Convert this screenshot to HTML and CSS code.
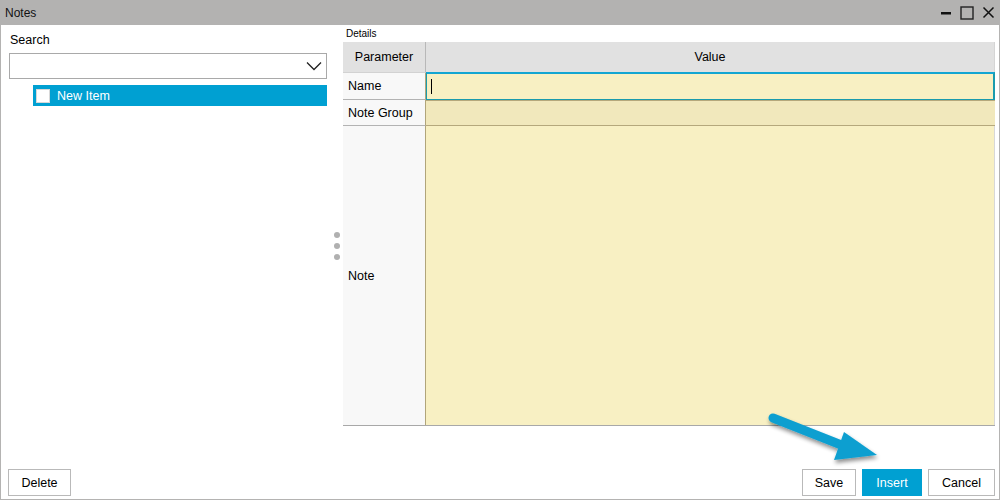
FILE: index.html
```html
<!DOCTYPE html>
<html>
<head>
<meta charset="utf-8">
<link rel="stylesheet" href="styles.css">
</head>
<body>
<div class="window">
  <div class="titlebar">
    <span class="title">Notes</span>
    <div class="controls">
      <svg width="12" height="12" viewBox="0 0 12 12"><rect x="1" y="5" width="10" height="2.5" fill="#111"/></svg>
      <svg width="14" height="14" viewBox="0 0 14 14"><rect x="1" y="1" width="12" height="12" fill="none" stroke="#222" stroke-width="1.4"/></svg>
      <svg width="13" height="13" viewBox="0 0 13 13"><path d="M1.5 1.5 L11.5 11.5 M11.5 1.5 L1.5 11.5" stroke="#111" stroke-width="1.5"/></svg>
    </div>
  </div>
  <div class="main">
    <div class="left">
      <div class="label">Search</div>
      <div class="combo">
        <svg class="chev" width="16" height="10" viewBox="0 0 16 10"><path d="M1 1.5 L8 8.5 L15 1.5" fill="none" stroke="#222" stroke-width="1.3"/></svg>
      </div>
      <div class="tree-item">
        <span class="check"></span>
        <span class="item-text">New Item</span>
      </div>
    </div>
    <div class="splitter">
      <span class="dot"></span><span class="dot"></span><span class="dot"></span>
    </div>
    <div class="right">
      <div class="details-label">Details</div>
      <div class="grid">
        <div class="hcell hparam">Parameter</div>
        <div class="hcell hvalue">Value</div>
        <div class="pcell r-name">Name</div>
        <div class="vcell focus"><span class="caret"></span></div>
        <div class="pcell r-group">Note Group</div>
        <div class="vcell group"></div>
        <div class="pcell r-note">Note</div>
        <div class="vcell note"></div>
      </div>
    </div>
  </div>
  <div class="footer">
    <button class="btn b-delete">Delete</button>
    <div class="spacer"></div>
    <button class="btn b-save">Save</button>
    <button class="btn primary b-insert">Insert</button>
    <button class="btn b-cancel">Cancel</button>
  </div>
  <svg class="arrow" width="140" height="70" viewBox="0 0 140 70">
    <defs>
      <filter id="sh" x="-20%" y="-20%" width="140%" height="160%">
        <feGaussianBlur in="SourceAlpha" stdDeviation="2"/>
        <feOffset dx="1" dy="3"/>
        <feComponentTransfer><feFuncA type="linear" slope="0.45"/></feComponentTransfer>
        <feMerge><feMergeNode/><feMergeNode in="SourceGraphic"/></feMerge>
      </filter>
    </defs>
    <g filter="url(#sh)">
      <line x1="12" y1="8" x2="88" y2="38" stroke="#0b9fd0" stroke-width="9" stroke-linecap="round"/>
      <polygon points="83,22 116,45 73,50" fill="#0b9fd0"/>
    </g>
  </svg>
</div>
</body>
</html>
```

FILE: styles.css
```css
* { box-sizing: border-box; }
html, body { margin: 0; padding: 0; }
body {
  width: 1000px;
  height: 500px;
  font-family: "Liberation Sans", Arial, sans-serif;
  font-size: 12px;
  color: #000;
  background: #fff;
  overflow: hidden;
}
.window {
  position: relative;
  width: 1000px;
  height: 500px;
  display: flex;
  flex-direction: column;
  border: 1px solid #b4b3b2;
  border-top: none;
}
.titlebar {
  height: 25px;
  flex: none;
  background: #b3b2b1;
  display: flex;
  align-items: center;
  padding: 0 0 0 5px;
  margin: 0 -1px;
}
.title { font-size: 12px; color: #111; }
.controls {
  margin-left: auto;
  display: flex;
  align-items: center;
  gap: 8px;
  padding-right: 5px;
}
.main {
  flex: 1;
  display: flex;
  min-height: 0;
}
.left {
  width: 330px;
  padding: 8px 0 0 8px;
  flex: none;
}
.label { height: 14px; line-height: 14px; margin-left: 1px; font-size: 12.5px; }
.combo {
  margin-top: 6px;
  height: 26px;
  width: 318px;
  border: 1px solid #a9a9a9;
  position: relative;
  display: flex;
  align-items: center;
  justify-content: flex-end;
  padding-right: 4px;
}
.tree-item {
  margin: 6px 0 0 24px;
  width: 294px;
  height: 21px;
  background: #00a0d2;
  display: flex;
  align-items: center;
  padding-left: 3px;
  color: #fff;
}
.check {
  width: 14px;
  height: 14px;
  background: #fff;
  border: 1px solid #d8d8d8;
  margin-right: 7px;
}
.item-text { font-size: 12.5px; }
.splitter {
  width: 12px;
  flex: none;
  display: flex;
  flex-direction: column;
  align-items: center;
  justify-content: center;
  gap: 5px;
  padding-top: 4px;
}
.dot {
  width: 6px;
  height: 6px;
  border-radius: 50%;
  background: #b0b0b0;
}
.right {
  flex: none;
  width: 652px;
  padding-top: 2px;
}
.details-label {
  font-size: 10px;
  height: 15px;
  line-height: 13px;
  padding-left: 3px;
}
.grid {
  display: grid;
  grid-template-columns: 83px 569px;
  grid-template-rows: 31px 27px 26px 299px;
  border-bottom: 1px solid #a8a8a8;
  font-size: 12.5px;
}
.hcell {
  background: #e1e1e1;
  display: flex;
  align-items: center;
  justify-content: center;
  border-bottom: 1px solid #d2d2d2;
}
.hparam { border-right: 1px solid #b8b8b8; }
.hvalue { border-right: 1px solid #d5d5d5; }
.pcell {
  background: #f8f8f8;
  border-right: 1px solid #b1a57a;
  border-bottom: 1px solid #b3b3b3;
  display: flex;
  align-items: center;
  padding-left: 5px;
}
.r-note { border-bottom: none; }
.vcell { background: #f8f0c3; }
.focus {
  border: 2px solid #1a9bad;
  border-left: 1px solid #1a9bad;
  border-top: 2px solid #13a6d2;
  margin-top: -1px;
  display: flex;
  align-items: center;
  padding-left: 4px;
  border-bottom: 1px solid #1a9bad;
}
.caret { width: 1px; height: 15px; background: #000; }
.group {
  background: #f1e8bc;
  border-top: 1px solid #b5a87c;
  border-bottom: 1px solid #b5a87c;
}
.note { border-right: 1px solid #d8d8d8; }
.footer {
  flex: none;
  height: 36px;
  display: flex;
  align-items: flex-start;
  padding: 6px 4px 0 7px;
}
.spacer { flex: 1; }
.btn {
  height: 27px;
  border: 1px solid #b9b9b9;
  background: #fff;
  font-family: "Liberation Sans", Arial, sans-serif;
  font-size: 12.5px;
  color: #000;
  padding: 0;
  margin: 0;
}
.b-delete { width: 63px; }
.b-save { width: 54px; }
.b-insert { width: 60px; margin-left: 6px; }
.b-cancel { width: 67px; margin-left: 6px; }
.btn.primary {
  background: #00a0d2;
  border-color: #00a0d2;
  color: #fff;
}
.arrow {
  position: absolute;
  left: 760px;
  top: 410px;
}
```
